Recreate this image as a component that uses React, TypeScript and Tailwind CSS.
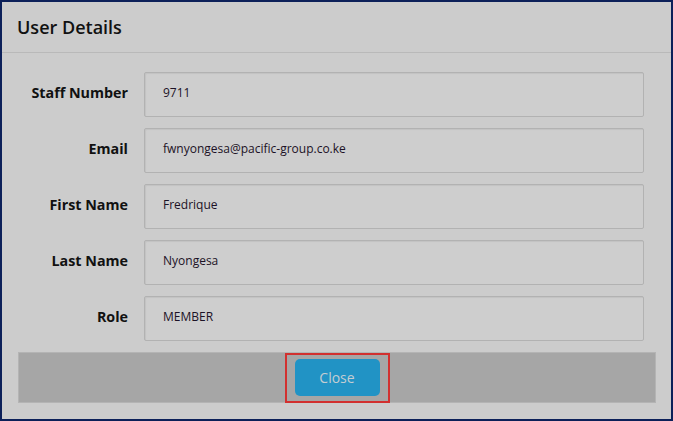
const fields = [
  { label: "Staff Number", value: "9711" },
  { label: "Email", value: "fwnyongesa@pacific-group.co.ke" },
  { label: "First Name", value: "Fredrique" },
  { label: "Last Name", value: "Nyongesa" },
  { label: "Role", value: "MEMBER" },
];

function Field({ label, value }: { label: string; value: string }) {
  return (
    <div className="flex items-center">
      <label className="mb-[3px] w-[126px] text-right text-[14.3px] font-bold text-[#111]">
        {label}
      </label>
      <div className="ml-4 flex h-[45px] w-[500px] items-center rounded-[2px] border border-[#b2b2b2] bg-[#cecece] pb-[3px] pl-[18px] text-[12px] text-[#1c1226] shadow-[inset_1px_1px_1px_rgba(0,0,0,0.06)]">
        {value}
      </div>
    </div>
  );
}

export default function App() {
  return (
    <div
      className="flex h-[421px] w-[673px] flex-col border-2 border-[#0c2059] bg-[#cccccc]"
      style={{ fontFamily: '"Open Sans", "Noto Sans", sans-serif' }}>
      <div className="flex h-[51px] shrink-0 items-center border-b border-[#b9b9b9] pl-[15px]">
        <h2 className="text-[18px] font-semibold text-[#111]">User Details</h2>
      </div>
      <div className="flex flex-col gap-[11px] pt-[19px]">
        {fields.map((f) => (
          <Field key={f.label} label={f.label} value={f.value} />
        ))}
      </div>
      <div className="mt-[11px] ml-4 mr-[15px] flex h-[51px] items-center justify-center border border-[#b4b4b4] bg-[#a6a6a6]">
        <div className="flex h-[50px] w-[105px] items-center justify-center border-2 border-[#d2302f]">
          <button className="h-[37px] w-[85px] rounded-[5px] bg-[#2193c5] text-[14px] text-[#c4cdd2]">
            Close
          </button>
        </div>
      </div>
    </div>
  );
}
